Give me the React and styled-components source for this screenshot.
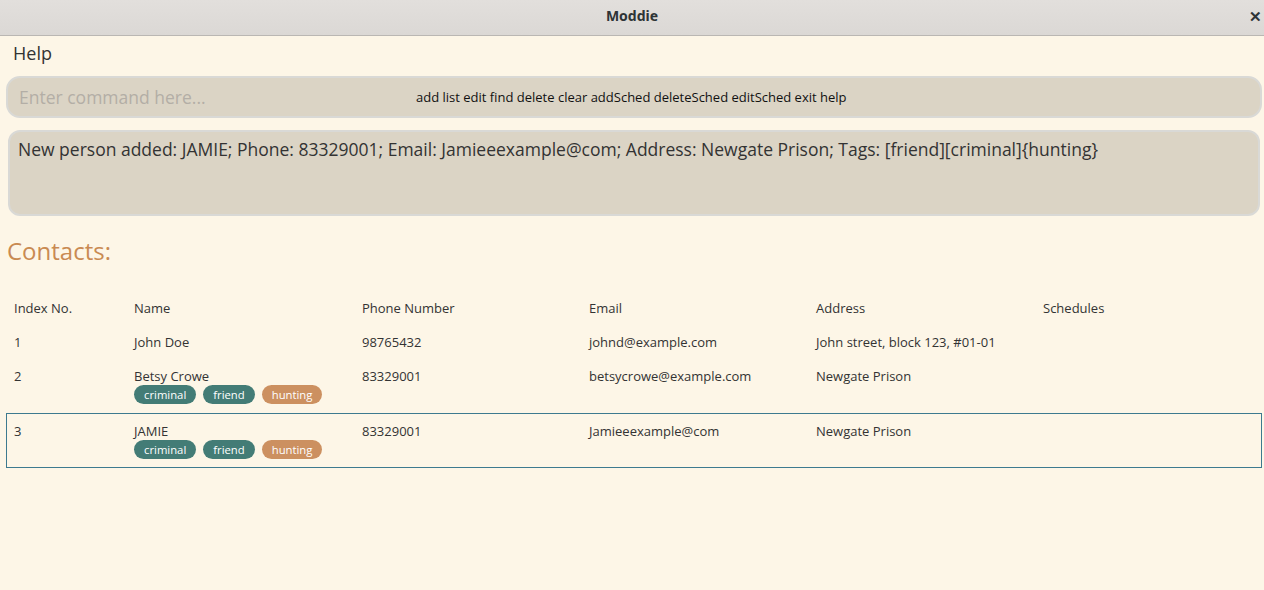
import styled, { createGlobalStyle } from "styled-components";

const GlobalStyle = createGlobalStyle`
  html, body {
    margin: 0;
    padding: 0;
    background: #fdf6e7;
  }
  #root {
    height: 590px;
  }
`;

const Window = styled.div`
  height: 590px;
  display: flex;
  flex-direction: column;
  background: #fdf6e7;
  font-family: "Open Sans", "Noto Sans", sans-serif;
  color: #333;
  overflow: hidden;
`;

const TitleBar = styled.div`
  height: 36px;
  flex-shrink: 0;
  position: relative;
  display: flex;
  align-items: center;
  justify-content: center;
  box-sizing: border-box;
  padding-bottom: 4px;
  background: linear-gradient(#e2dfdc, #dbd8d5);
  border-bottom: 1px solid #bab7b3;
  font-family: "Noto Sans", sans-serif;
  font-weight: bold;
  font-size: 14px;
  color: #2e3436;
`;

const CloseButton = styled.span`
  position: absolute;
  right: 2px;
  top: 6px;
  font-size: 15px;
  font-weight: bold;
  color: #2e3436;
`;

const MenuBar = styled.div`
  height: 35px;
  box-sizing: border-box;
  padding: 0 0 2px 13px;
  display: flex;
  align-items: center;
  font-size: 18px;
  color: #333;
`;

const CommandBox = styled.div`
  margin: 5px 2px 0 6px;
  height: 38px;
  border: 2px solid #d9d9d6;
  border-radius: 14px;
  background: #dbd4c5;
  display: flex;
  align-items: center;
  padding-left: 11px;
`;

const Placeholder = styled.span`
  font-size: 17.5px;
  color: #b3aea6;
  width: 397px;
  flex-shrink: 0;
`;

const Commands = styled.span`
  font-size: 13px;
  color: #111;
`;

const ResultBox = styled.div`
  margin: 12px 4px 0 8px;
  border: 2px solid #d9d9d6;
  border-radius: 12px;
  background: #dbd4c5;
  padding: 5px 8px;
  box-sizing: border-box;
  height: 86px;
  font-size: 17.5px;
  color: #333;
`;

const SectionTitle = styled.div`
  margin: 19px 0 0 7px;
  font-size: 24px;
  color: #c98a52;
  line-height: 32px;
`;

const Table = styled.div`
  margin-top: 24px;
  display: flex;
  flex-direction: column;
`;

const Row = styled.div`
  display: grid;
  grid-template-columns: 120px 228px 227px 227px 227px 1fr;
  padding: ${({ $selected }) => ($selected ? "8px 0 0 7px" : "8px 0 0 8px")};
  margin: 0 2px 0 6px;
  border: ${({ $selected }) => ($selected ? "1px solid #3d7a8f" : "none")};
  height: ${({ $height }) => $height}px;
  box-sizing: border-box;
  font-size: 13px;
  line-height: 18px;
  color: #333;
`;

const Cell = styled.div`
  display: flex;
  flex-direction: column;
  align-items: flex-start;
`;

const Tags = styled.div`
  display: flex;
  gap: 7px;
  height: 19px;
`;

const Tag = styled.span`
  background: ${({ $color }) => $color};
  color: #fff;
  font-size: 11.3px;
  line-height: 19px;
  height: 19px;
  padding: 0 10px;
  border-radius: 10px;
`;

const TEAL = "#437c76";
const ORANGE = "#cc9060";

const tagColor = (t) => (t === "hunting" ? ORANGE : TEAL);

const people = [
  { i: 1, name: "John Doe", phone: "98765432", email: "johnd@example.com", address: "John street, block 123, #01-01", tags: [] },
  { i: 2, name: "Betsy Crowe", phone: "83329001", email: "betsycrowe@example.com", address: "Newgate Prison", tags: ["criminal", "friend", "hunting"] },
  { i: 3, name: "JAMIE", phone: "83329001", email: "Jamieeexample@com", address: "Newgate Prison", tags: ["criminal", "friend", "hunting"], selected: true },
];

const rowHeight = (p) => (p.selected ? 55 : p.tags.length ? 54 : 34);

export default function App() {
  return (
    <>
      <GlobalStyle />
      <Window>
        <TitleBar>
          Moddie
          <CloseButton>✕</CloseButton>
        </TitleBar>
        <MenuBar>Help</MenuBar>
        <CommandBox>
          <Placeholder>Enter command here...</Placeholder>
          <Commands>add list edit find delete clear addSched deleteSched editSched exit help</Commands>
        </CommandBox>
        <ResultBox>
          New person added: JAMIE; Phone: 83329001; Email: Jamieeexample@com; Address: Newgate Prison; Tags: [friend][criminal]{"{hunting}"}
        </ResultBox>
        <SectionTitle>Contacts:</SectionTitle>
        <Table>
          <Row $height={34}>
            <Cell>Index No.</Cell>
            <Cell>Name</Cell>
            <Cell>Phone Number</Cell>
            <Cell>Email</Cell>
            <Cell>Address</Cell>
            <Cell>Schedules</Cell>
          </Row>
          {people.map((p) => (
            <Row key={p.i} $selected={p.selected} $height={rowHeight(p)}>
              <Cell>{p.i}</Cell>
              <Cell>
                {p.name}
                {p.tags.length > 0 && (
                  <Tags>
                    {p.tags.map((t) => (
                      <Tag key={t} $color={tagColor(t)}>{t}</Tag>
                    ))}
                  </Tags>
                )}
              </Cell>
              <Cell>{p.phone}</Cell>
              <Cell>{p.email}</Cell>
              <Cell>{p.address}</Cell>
              <Cell></Cell>
            </Row>
          ))}
        </Table>
      </Window>
    </>
  );
}
